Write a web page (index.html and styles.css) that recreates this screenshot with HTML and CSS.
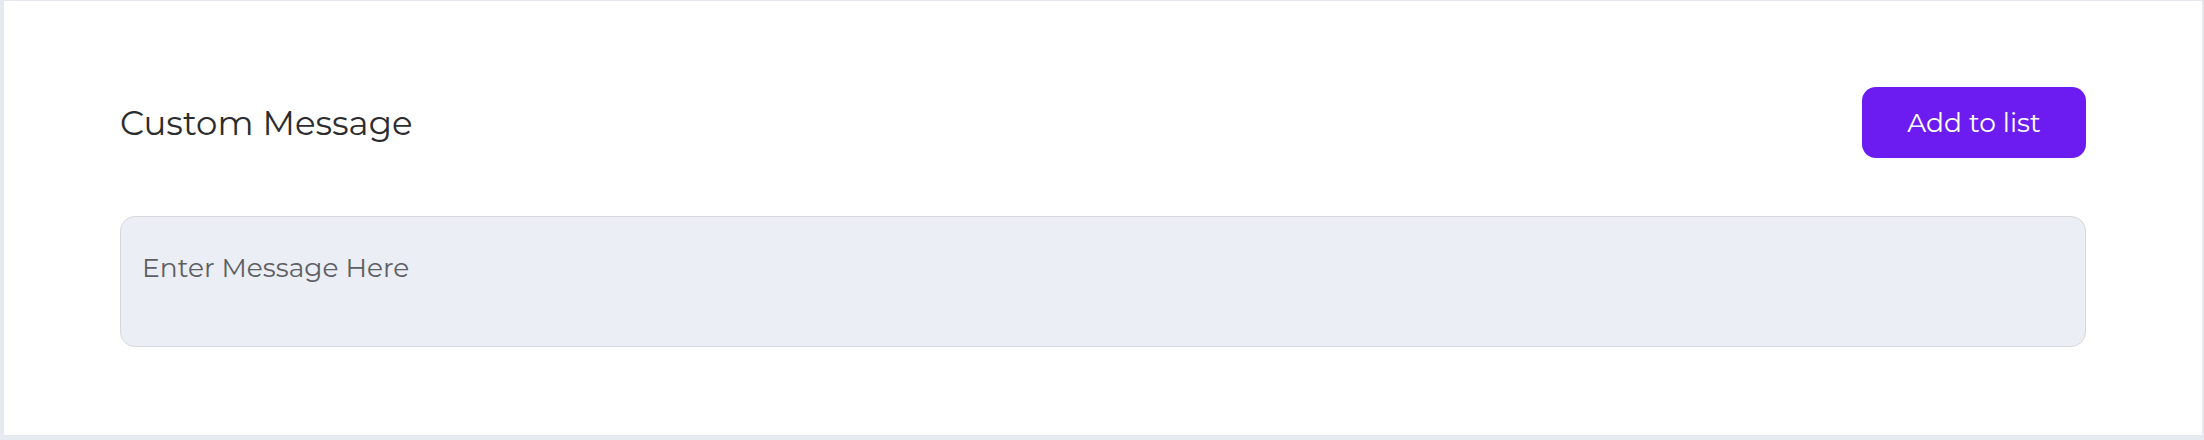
FILE: index.html
```html
<!DOCTYPE html>
<html lang="en">
<head>
    <meta charset="UTF-8">
    <meta name="viewport" content="width=device-width, initial-scale=1.0">
    <title>Custom Message</title>
    <link rel="stylesheet" href="styles.css">
</head>
<body>
    <main class="panel">
        <div class="panel-head">
            <h2 class="panel-title">Custom Message</h2>
            <button type="button" class="add-btn">Add to list</button>
        </div>
        <textarea class="message-input" placeholder="Enter Message Here"></textarea>
    </main>
</body>
</html>
```

FILE: styles.css
```css
body {
    font-family: Montserrat, "Open Sans", sans-serif;
    margin: 0;
    padding: 1px 2px 5px 4px;
    background-color: #e7e9f1;
}
.panel {
    height: 434px;
    box-sizing: border-box;
    padding: 86px 116px 0 116px;
    background-color: #ffffff;
}
.panel-head {
    display: flex;
    align-items: center;
    justify-content: space-between;
    height: 71px;
}
.panel-title {
    margin: 0;
    font-size: 34px;
    font-weight: 400;
    color: #2c2c2e;
}
.add-btn {
    width: 224px;
    height: 71px;
    border: none;
    border-radius: 14px;
    background-color: #6c1cf0;
    color: #ffffff;
    font-family: inherit;
    font-size: 26.5px;
    cursor: pointer;
}
.message-input {
    display: block;
    width: 100%;
    height: 131px;
    box-sizing: border-box;
    margin-top: 58px;
    padding: 34px 21px 0 21px;
    border: 1.5px solid #d7d7db;
    border-radius: 15px;
    background-color: #ebeef5;
    font-family: inherit;
    font-size: 26.5px;
    color: #333;
    resize: none;
    outline: none;
}
.message-input::placeholder {
    color: #5e5f64;
}
```
